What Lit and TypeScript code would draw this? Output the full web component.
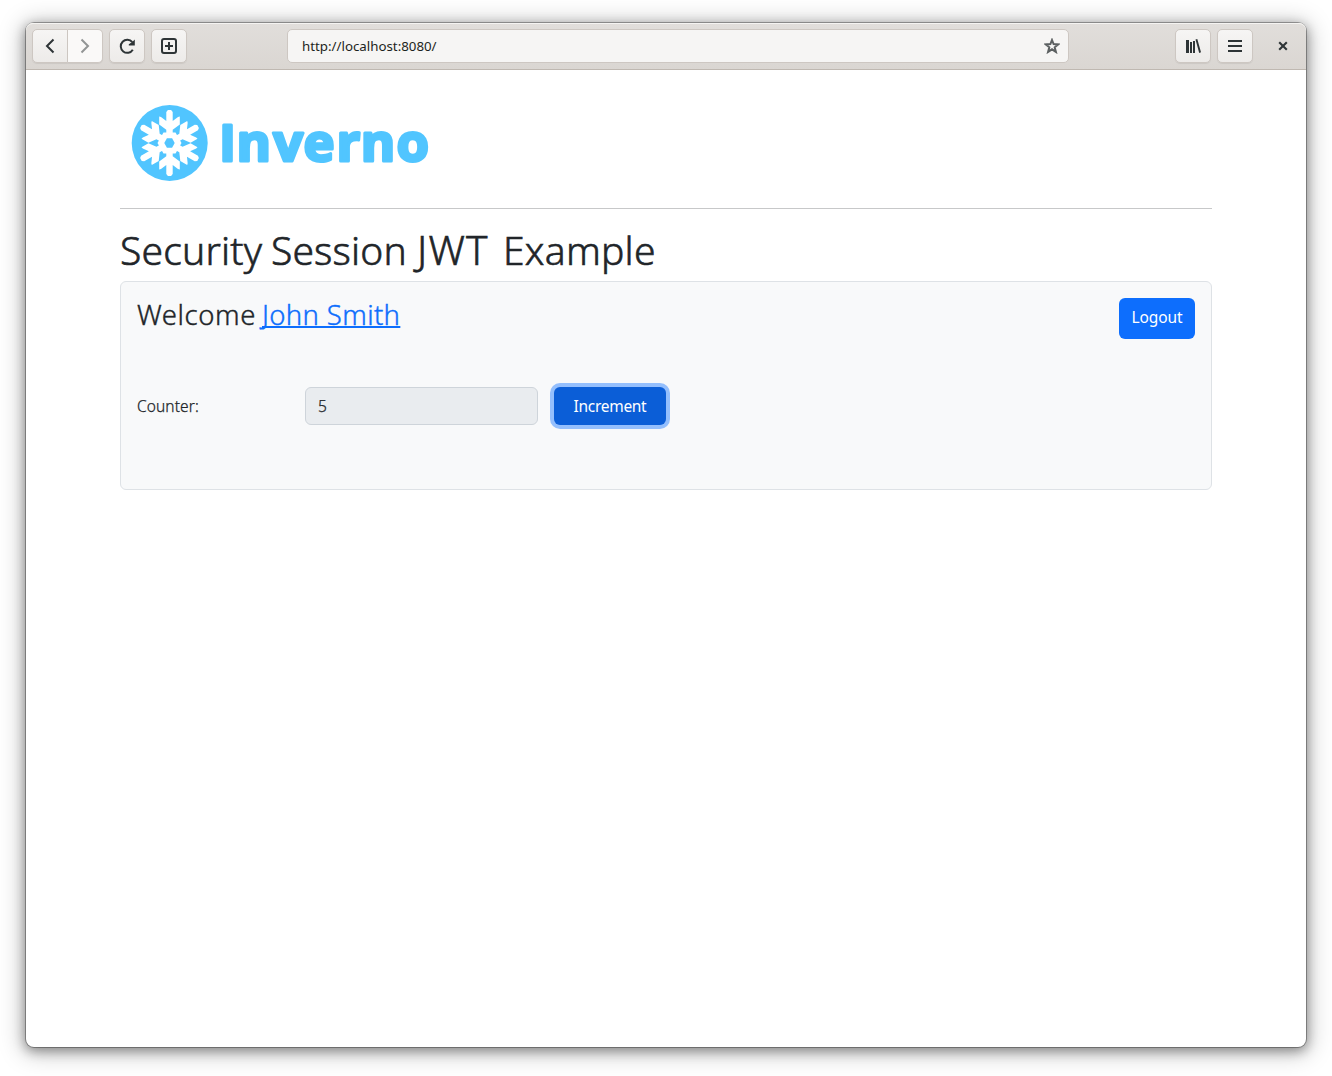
import { LitElement, html, css, svg } from "lit";
import { customElement, state } from "lit/decorators.js";

const ARM_ANGLES = [0, 60, 120, 180, 240, 300];

@customElement("inverno-logo")
class InvernoLogo extends LitElement {
  static styles = css`
    :host { display: block; width: 320px; height: 100px; }
    .logo { display: block; }
    .flake { fill: #fff; }
    .accent { fill: #51c5ff; }
    .word {
      font: 700 52.5px "Open Sans", "Noto Sans", sans-serif;
      fill: #51c5ff;
      stroke: #51c5ff;
      stroke-width: 3px;
      stroke-linejoin: round;
    }
    .initial { font-size: 50px; }
  `;

  render() {
    return html`<svg class="logo" width="320" height="100" viewBox="0 0 320 100">
      <circle class="accent" cx="49.7" cy="49" r="38"></circle>
      <g transform="translate(49.5 49)">
        ${ARM_ANGLES.map(
          (a) => svg`<path class="flake" transform=${`rotate(${a})`}
            d="M-3.2-7V-13.2L-10.3-18.4V-26.4L-8.5-25.9L-3.2-22V-31L-1.6-33H1.6L3.2-31V-22L8.5-25.9L10.3-26.4V-18.4L3.2-13.2V-7Z"></path>`
        )}
        <path class="flake" d="M-6-10.4H6L12 0L6 10.4H-6L-12 0Z"></path>
        <path class="accent" d="M-2.6-4.7H2.6L5.2 0L2.6 4.7H-2.6L-5.2 0Z"></path>
      </g>
      <text class="word" y="66.6" x="99.2 116.4 153.3 183.6 216.6 240.8 276.6"><tspan class="initial">I</tspan>nverno</text>
    </svg>`;
  }
}

@customElement("browser-bar")
class BrowserBar extends LitElement {
  static styles = css`
    :host {
      display: flex;
      align-items: flex-start;
      gap: 6px;
      box-sizing: border-box;
      height: 47px;
      padding: 6px;
      border-bottom: 1px solid #bfb8b1;
      border-radius: 7px 7px 0 0;
      background: linear-gradient(#e1dedb, #dad6d2);
      box-shadow: inset 0 1px #f5f4f2;
    }
    .btn {
      display: flex;
      align-items: center;
      justify-content: center;
      box-sizing: border-box;
      width: 36px;
      height: 34px;
      border: 1px solid #cdc7c2;
      border-radius: 5px;
      background: linear-gradient(#f6f5f4, #edebe9);
      box-shadow: 0 1px 1px rgba(0, 0, 0, 0.07);
      color: #2e3436;
    }
    .pair { display: flex; }
    .back { border-radius: 5px 0 0 5px; }
    .forward {
      width: 35px;
      border-left: 0;
      border-radius: 0 5px 5px 0;
      background: #faf9f8;
      color: #929595;
    }
    .address {
      display: flex;
      align-items: center;
      justify-content: space-between;
      box-sizing: border-box;
      width: 782px;
      height: 34px;
      margin: 0 auto 0 94px;
      padding: 0 8px 0 14px;
      border: 1px solid #cdc7c2;
      border-radius: 5px;
      background: #f6f5f4;
      color: #1c1f20;
      font: 13.3px "Noto Sans", sans-serif;
    }
    .star { color: #5c6061; }
    .close {
      display: flex;
      align-items: center;
      justify-content: center;
      width: 36px;
      height: 34px;
      margin-left: 6px;
      margin-right: -1px;
      color: #2e3436;
    }
    svg { display: block; fill: none; stroke: currentColor; }
  `;

  render() {
    return html`
      <div class="pair">
        <div class="btn back"><svg width="16" height="16" stroke-width="2"><path d="M11.5 1.5L5 8L11.5 14.5"></path></svg></div>
        <div class="btn forward"><svg width="16" height="16" stroke-width="2"><path d="M4.5 1.5L11 8L4.5 14.5"></path></svg></div>
      </div>
      <div class="btn"><svg width="18" height="18" stroke-width="2"><path d="M14.8 12.7A6.5 6.5 0 1 1 14.3 5.2"></path><path d="M16.8 2.5V8.5H10.8V7.2L14.2 5Z" fill="currentColor" stroke="none"></path></svg></div>
      <div class="btn"><svg width="16" height="16" stroke-width="2"><rect x="1" y="1" width="14" height="14" rx="2"></rect><path d="M8 4V12M4 8H12"></path></svg></div>
      <div class="address">
        <span class="url">http://localhost:8080/</span>
        <svg class="star" width="16" height="16" stroke-width="2"><path d="M8 2L9.6 6.1L14.2 6.4L10.7 9.3L11.9 13.9L8 11.3L4.1 13.9L5.3 9.3L1.8 6.4L6.4 6.1Z"></path></svg>
      </div>
      <div class="btn"><svg width="16" height="16"><path fill="currentColor" stroke="none" d="M1 2H4V15H1ZM5 4H7V15H5ZM8 3H10V15H8ZM10.5 1.5L12.3 1L16 14.3L14.2 15Z"></path></svg></div>
      <div class="btn"><svg width="16" height="16" stroke-width="2"><path d="M1 3H15M1 8H15M1 13H15"></path></svg></div>
      <div class="close"><svg width="10" height="10" stroke-width="2.1"><path d="M1.2 1.2L8.8 8.8M8.8 1.2L1.2 8.8"></path></svg></div>
    `;
  }
}

@customElement("app-root")
class AppRoot extends LitElement {
  @state() private counter = 5;

  static styles = css`
    :host {
      display: block;
      box-sizing: border-box;
      height: 1076px;
      padding: 23px 26px 29px;
      background: #fff;
      overflow: hidden;
      font-family: "Noto Sans", sans-serif;
      color: #212529;
    }
    .window {
      height: 1024px;
      border-radius: 8px;
      background: #fff;
      box-shadow: 0 0 0 1px rgba(0, 0, 0, 0.3), 0 3px 12px 1px rgba(0, 0, 0, 0.38), 0 3px 24px 4px rgba(0, 0, 0, 0.22);
    }
    .page { display: flex; flex-direction: column; padding: 24px 94px 0; }
    .rule { height: 1px; margin: 14px 0 16px; background: #c7c8c9; }
    .title {
      display: flex;
      height: 47px;
      margin: 1px 0 8px;
      font-size: 39px;
      line-height: 47px;
      font-weight: 300;
      white-space: pre;
      -webkit-text-stroke: 0.6px currentColor;
    }
    .security { width: 151px; letter-spacing: 0.2px; }
    .session { width: 146px; letter-spacing: 0.15px; }
    .jwt { width: 86px; letter-spacing: 1.2px; font-size: 40.5px; }
    .example { letter-spacing: 0.25px; }
    .card {
      box-sizing: border-box;
      height: 209px;
      padding: 16px;
      border: 1px solid #dee2e6;
      border-radius: 6px;
      background: #f8f9fa;
    }
    .top { display: flex; justify-content: space-between; align-items: flex-start; height: 89px; }
    .welcome {
      display: flex;
      margin: 0;
      font-size: 27.5px;
      line-height: 34px;
      font-weight: 300;
      white-space: nowrap;
      letter-spacing: 0.35px;
      -webkit-text-stroke: 0.4px currentColor;
    }
    .hello { width: 125px; letter-spacing: 0.6px; }
    .user { color: #0d6efd; text-decoration: underline; text-decoration-thickness: 2px; text-underline-offset: 1px; text-decoration-skip-ink: none; }
    .action {
      box-sizing: border-box;
      padding: 0;
      border: 0;
      border-radius: 6px;
      background: #0d6efd;
      color: #fff;
      font: 15.5px "Noto Sans", sans-serif;
    }
    .logout { width: 76px; height: 41px; padding-bottom: 3px; letter-spacing: -0.1px; }
    .row { display: flex; align-items: center; height: 38px; font-size: 15.5px; }
    .label { width: 168px; font-weight: 300; letter-spacing: 0.1px; -webkit-text-stroke: 0.25px currentColor; }
    .value {
      box-sizing: border-box;
      width: 233px;
      height: 38px;
      margin-right: 16px;
      padding: 0 12px;
      border: 1px solid #ced4da;
      border-radius: 6px;
      background: #e9ecef;
      font-weight: 300;
      line-height: 36px;
      -webkit-text-stroke: 0.25px currentColor;
    }
    .increment { width: 112px; height: 38px; letter-spacing: -0.3px; background: #0b5ed7; box-shadow: 0 0 0 4px #94bffd; }
  `;

  render() {
    return html`
      <div class="window">
        <browser-bar></browser-bar>
        <main class="page">
          <inverno-logo></inverno-logo>
          <div class="rule"></div>
          <h1 class="title"><span class="security">Security </span><span class="session">Session </span><span class="jwt">JWT </span><span class="example">Example</span></h1>
          <section class="card">
            <div class="top">
              <h3 class="welcome"><span class="hello">Welcome </span><span class="user">John Smith</span></h3>
              <button class="action logout"><span class="text">Logout</span></button>
            </div>
            <div class="row">
              <span class="label"><span class="caption">Counter:</span></span>
              <div class="value">${this.counter}</div>
              <button class="action increment" @click=${() => this.counter++}><span class="text">Increment</span></button>
            </div>
          </section>
        </main>
      </div>
    `;
  }
}
